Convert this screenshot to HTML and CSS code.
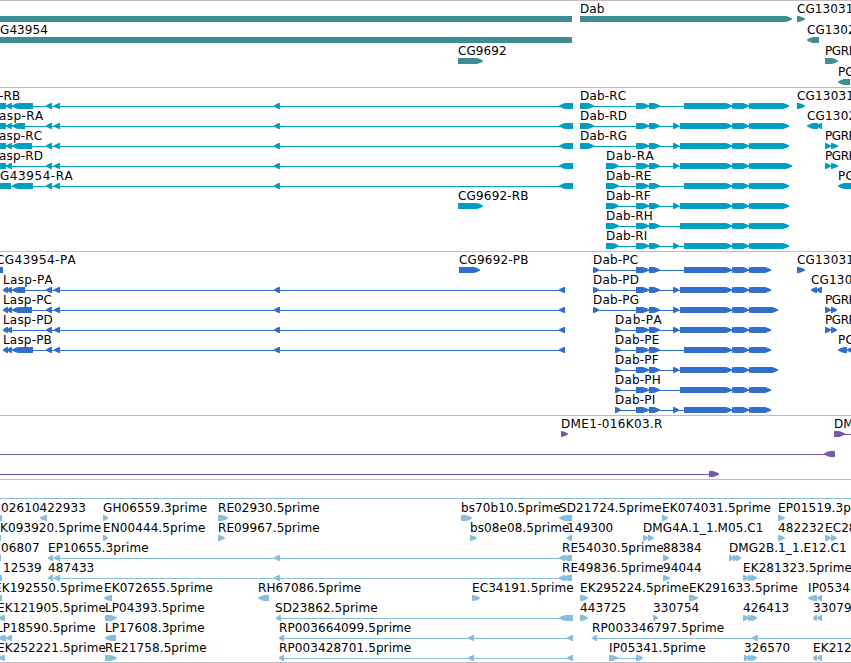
FILE: index.html
```html
<!DOCTYPE html>
<html lang="en">
<head>
<meta charset="utf-8">
<title>Genome browser</title>
<link rel="stylesheet" href="styles.css">
</head>
<body>
<main class="browser">
  <section class="track genes"></section>
  <section class="track transcripts"></section>
  <section class="track proteins"></section>
  <section class="track clones"></section>
  <section class="track ests"></section>
</main>
<script src="tracks.js"></script>
</body>
</html>
```
FILE: styles.css
```css
body {
  margin: 0;
  background: #fff;
  overflow: hidden;
}

.browser {
  display: flex;
  flex-direction: column;
  width: 851px;
  border-bottom: 1px solid #bfbfbf;
}

.track {
  box-sizing: border-box;
  border-top: 1px solid #bfbfbf;
  overflow: hidden;
}

.track svg {
  display: block;
  width: 851px;
  height: 100%;
  fill: currentColor;
}

.label {
  fill: #000;
  font: 12px "DejaVu Sans", sans-serif;
  font-kerning: none;
  letter-spacing: 0.09px;
}

.intron {
  shape-rendering: crispEdges;
}

.genes { height: 87px; color: #3d8e93; }
.transcripts { height: 164px; color: #009fc1; }
.proteins { height: 164px; color: #316dcd; }
.clones { height: 64px; color: #7759a8; }
.ests { height: 183px; color: #89bdde; }

.transcripts .label,
.proteins .label {
  letter-spacing: 0.18px;
}
```
FILE: tracks.js
```js
// Row items: "@x text" or "@x:length text" is a label, "-a b" an intron line,
// ">a b" / "<a b" a stranded block and "=a b" a plain block.
const dab = (start, exon, small, end) =>
  [`-${start} ${end}`, '>636 639', '>637 649', '>649 652', '>650 660',
   ...(small ? ['>673 679'] : []),
   `>${exon} 732`, '>732 735', '>734 749', '>749 752', `>751 ${end}`];
const dabR = (exon, small, end = 789) => ['>580 594', ...dab(580, exon, small, end)];
const dabR2 = (exon, small, end = 789) => ['>606 619', ...dab(606, exon, small, end)];
const dabP = (exon, small, end = 771) => ['>593 599', ...dab(593, exon, small, end)];
const dabP2 = (exon, small, end = 771) => ['>615 621', ...dab(615, exon, small, end)];
const lasp = ['<46 52', '<54 60', '<274 280'];
const laspR = ['-0 573', ...lasp, '<559 573'];
const laspP = ['-3 565', '<3 8', '<7 12', ...lasp, '<559 565'];
const est = ['-48 572', '<48 53', '<54 60', '<274 280', '<559 565', '<562 572'];
const rp = ['-279 573', '<279 284', '<468 474', '<567 573'];

const tracks = {
  genes: { pitch: 21, rows: [
    ['=0 572', '>580 792', '@580 Dab', '>797 805', '@797 CG13031'],
    ['=0 572', '@0 G43954', '<807 819', '@807 CG1302'],
    ['>458 483', '@458 CG9692', '>825 838', '@825:31 PGRP'],
    ['<838 850', '@838 PG']
  ] },
  transcripts: { pitch: 20, rows: [
    ['@-1 -RB', ...laspR, '=0 6', '<6 12', '<12 33', '@580 Dab-RC', ...dabR(684, 0), '>797 805', '@797 CG13031'],
    ['@-1:44.5 asp-RA', ...laspR, '=0 6', '<6 12', '<12 25', '@580 Dab-RD', ...dabR(680, 1), '<807 818', '<817 822', '@807 CG1302'],
    ['@-1 asp-RC', ...laspR, '=0 6', '<6 12', '<12 32', '@580 Dab-RG', ...dabR(680, 1), '>825 831', '>831 838', '@825:31 PGRP'],
    ['@-1 asp-RD', ...laspR, '=0 6', '<6 12', '@606:48 Dab-RA', ...dabR2(680, 1, 792), '>825 831', '>831 838', '@825:31 PGRP'],
    ['@0:73 G43954-RA', ...laspR, '=0 11', '<12 33', '@606 Dab-RE', ...dabR2(684, 0), '<838 852', '@838 PG'],
    ['@458 CG9692-RB', '>458 483', '@606 Dab-RF', ...dabR2(680, 1)],
    ['@606 Dab-RH', ...dabR2(680, 0)],
    ['@606 Dab-RI', ...dabR2(684, 1)]
  ] },
  proteins: { pitch: 20, rows: [
    ['@-4:80 CG43954-PA', '=0 3', '@459 CG9692-PB', '>459 480', '@593 Dab-PC', ...dabP(684, 0), '>797 805', '@797 CG13031'],
    ['@3:50 Lasp-PA', ...laspP, '<12 25', '@593 Dab-PD', ...dabP(680, 1), '<811 817', '<816 822', '@811 CG130'],
    ['@3 Lasp-PC', ...laspP, '<12 32', '@593 Dab-PG', ...dabP(680, 1, 778), '>825 831', '>831 837', '@825:31 PGRP'],
    ['@3 Lasp-PD', ...laspP, '@615:47 Dab-PA', ...dabP2(680, 1), '>825 831', '>831 837', '@825:31 PGRP'],
    ['@3 Lasp-PB', ...laspP, '<12 33', '@615 Dab-PE', ...dabP2(684, 0), '<838 847', '<847 853', '@838 PG'],
    ['@615 Dab-PF', ...dabP2(680, 1, 778)],
    ['@615 Dab-PH', ...dabP2(680, 0)],
    ['@615 Dab-PI', ...dabP2(684, 1)]
  ] },
  clones: { pitch: 20, rows: [
    ['@561:101.5 DME1-016K03.R', '>561 568', '@834 DM', '-834 851', '>834 845'],
    ['-0 835', '<824 835'],
    ['-0 719', '>709 719']
  ] },
  ests: { pitch: 20, rows: [
    ['-0 851'],
    ['@1 02610422933', '=0 2', '<40 47', '@103 GH06559.3prime', '>103 108', '@218 RE02930.5prime', '>218 228', '@461 bs70b10.5prime', '>461 472', '@559 SD21724.5prime', '<559 572', '@662 EK074031.5prime', '>662 668', '@778 EP01519.3prime', '>778 785'],
    ['@0 K093920.5prime', '=0 1', '@103 EN00444.5prime', '>103 108', '@218 RE09967.5prime', '>218 225', '@470 bs08e08.5prime', '>470 477', '@567 149300', '<567 572', '@643 DMG4A.1_1.M05.C1', '>643 648', '>648 654', '@778 482232', '>778 785', '@825 EC28', '>825 831', '>831 837'],
    ['@1 06807', '=0 1', '@48 EP10655.3prime', ...est, '@562 RE54030.5prime', '@663 88384', '>663 669', '@729 DMG2B.1_1.E12.C1', '>729 734', '>733 738', '>736 741'],
    ['@3 12539', '=0 2', '@48 487433', ...est, '@562 RE49836.5prime', '@663 94044', '>663 670', '@743 EK281323.5prime', '>743 749', '>748 753', '>751 757'],
    ['@-6 EK192550.5prime', '=0 2', '@104 EK072655.5prime', '<104 112', '@258 RH67086.5prime', '<258 269', '@472 EC34191.5prime', '>472 480', '@580 EK295224.5prime', '>580 588', '@689 EK291633.5prime', '>689 698', '@808 IP0534', '<808 817', '<817 822'],
    ['@-3 EK121905.5prime', '<-2 5', '@105 LP04393.5prime', '>105 117', '@275 SD23862.5prime', '-276 573', '<276 281', '<559 573', '@580 443725', '>580 588', '@653 330754', '>653 658', '@743 426413', '>743 749', '>748 753', '>751 757', '@813 33079', '<813 817', '<817 822'],
    ['@-4 LP18590.5prime', '<-2 6', '<6 12', '@105 LP17608.3prime', '<105 116', '@279 RP003664099.5prime', ...rp, '@592 RP003346797.5prime', '-592 851', '<592 597', '<752 758'],
    ['@-3 EK252221.5prime', '<-2 5', '@105 RE21758.5prime', '>105 117', '@279 RP003428701.5prime', ...rp, '@609 IP05341.5prime', '-609 642', '>609 618', '>636 639', '>637 643', '@744 326570', '>744 749', '>748 753', '>751 757', '@813 EK212', '<813 817', '<817 822']
  ] }
};

function draw(item, top) {
  const kind = item[0];
  const rest = item.slice(1);
  if (kind === '@') {
    const gap = rest.indexOf(' ');
    const [x, length] = rest.slice(0, gap).split(':');
    const fit = length ? ` textLength="${length}"` : '';
    return `<text class="label" x="${x}" y="${top - 3}"${fit}>${rest.slice(gap + 1)}</text>`;
  }
  const [a, b] = rest.split(' ').map(Number);
  if (kind === '-') return `<rect class="intron" x="${a}" y="${top + 3}" width="${b - a}" height="1"/>`;
  if (kind === '=') return `<rect x="${a}" y="${top}" width="${b - a}" height="6"/>`;
  const head = Math.min(b - a - 1, 6);
  const [back, neck, mid, tip] = kind === '>'
    ? [a, b - head, b - head / 2, b]
    : [b, a + head, a + head / 2, a];
  return `<path d="M${back} ${top}H${neck}L${mid} ${top + 1}L${tip} ${top + 2.5}V${top + 3.5}L${mid} ${top + 5}L${neck} ${top + 6}H${back}Z"/>`;
}

for (const [name, track] of Object.entries(tracks)) {
  const shapes = track.rows.map((row, i) =>
    row.map(item => draw(item, 15 + i * track.pitch)).join('')).join('');
  document.querySelector('.' + name).innerHTML = `<svg>${shapes}</svg>`;
}
```
